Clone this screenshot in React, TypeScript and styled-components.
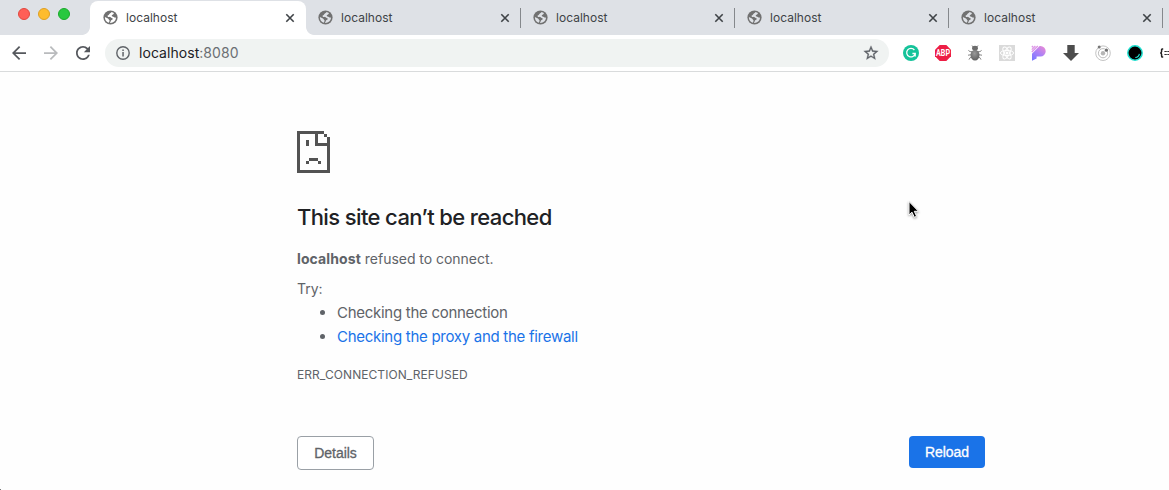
import React from "react";
import styled, { createGlobalStyle } from "styled-components";

const GlobalStyle = createGlobalStyle`
  * { box-sizing: border-box; }
  html, body { margin: 0; background: #fff; overflow: hidden; }
  svg { display: block; flex: none; overflow: visible; }
`;

const Window = styled.div`
  position: relative;
  width: 1169px;
  height: 490px;
  overflow: hidden;
  display: flex;
  flex-direction: column;
  background: #fefefe;
  font-family: Inter, "Liberation Sans", sans-serif;
  color: #5f6368;
`;

const TabStrip = styled.header`
  display: flex;
  height: 35px;
  flex: none;
  background: #dee1e6;
`;

const TrafficLights = styled.div`
  display: flex;
  gap: 8px;
  width: 90px;
  padding: 8px 0 0 18px;
  flex: none;
`;

const Light = styled.span<{ $fill: string; $edge: string }>`
  width: 12px;
  height: 12px;
  border-radius: 50%;
  background: ${(p) => p.$fill};
  border: 1px solid ${(p) => p.$edge};
`;

const Tab = styled.div<{ $active?: boolean; $inset: number }>`
  position: relative;
  display: flex;
  align-items: center;
  flex: none;
  width: ${(p) => (p.$active ? 216 : 214)}px;
  height: ${(p) => (p.$active ? 34 : 35)}px;
  margin-top: ${(p) => (p.$active ? 1 : 0)}px;
  padding: ${(p) => (p.$active ? "0 11px 1px 0" : "0 10px 0 0")};
  padding-left: ${(p) => p.$inset}px;
  border-radius: ${(p) => (p.$active ? "8px 8px 0 0" : "0")};
  background: ${(p) => (p.$active ? "#fff" : "transparent")};

  &::before,
  &::after {
    content: "";
    display: ${(p) => (p.$active ? "block" : "none")};
    position: absolute;
    bottom: 0;
    width: 8px;
    height: 8px;
  }
  &::before {
    left: -8px;
    background: radial-gradient(circle at 0 0, transparent 7.5px, #fff 8.2px);
  }
  &::after {
    right: -8px;
    background: radial-gradient(circle at 100% 0, transparent 7.5px, #fff 8.2px);
  }
`;

const Divider = styled.span`
  width: 1px;
  height: 20px;
  margin: 8px -1px 0 0;
  flex: none;
  background: #85888c;
`;

const TabTitle = styled.span`
  flex: 1;
  margin-left: 8px;
  font-size: 12px;
  line-height: 16px;
  letter-spacing: 0.02px;
  color: #3f4347;
`;

const Toolbar = styled.nav`
  display: flex;
  align-items: center;
  height: 37px;
  flex: none;
  padding: 0 0 1px 12px;
  background: #fff;
  border-bottom: 1px solid #d9dbdc;
`;

const NavIcons = styled.div`
  display: flex;
  align-items: center;
  gap: 18px;
  width: 93px;
  flex: none;
`;

const AddressBar = styled.div`
  display: flex;
  align-items: center;
  width: 784px;
  height: 28px;
  flex: none;
  padding: 0 10px 0 11px;
  border-radius: 14px;
  background: #f0f3f2;
`;

const Url = styled.span`
  flex: 1;
  margin-left: 9px;
  font-size: 14px;
  line-height: 20px;
  letter-spacing: 0.05px;
  color: #202124;
`;

const Port = styled.span`
  color: #6b6f73;
`;

const Extensions = styled.div`
  display: flex;
  gap: 16px;
  margin-left: 14px;
  flex: none;
`;

const Page = styled.main`
  width: 688px;
  margin-left: 297px;
  padding-top: 59px;
`;

const Heading = styled.h1`
  margin: 30px 0 0;
  font-size: 22px;
  line-height: 28px;
  font-weight: 500;
  letter-spacing: -0.62px;
  white-space: nowrap;
  color: #202124;
`;

const Message = styled.p<{ $top: number }>`
  margin: ${(p) => p.$top}px 0 0;
  font-size: 14px;
  line-height: 24px;
  letter-spacing: -0.03px;
  white-space: nowrap;
`;

const Host = styled.strong`
  letter-spacing: 0.11px;
`;

const Suggestions = styled.ul`
  margin: 0;
  padding-left: 40px;
  font-size: 15px;
  line-height: 24px;
  letter-spacing: -0.28px;
`;

const Link = styled.a`
  color: #1a73e8;
`;

const ErrorCode = styled.div`
  margin-top: 18px;
  font-size: 12px;
  line-height: 16px;
  letter-spacing: 0.07px;
`;

const Actions = styled.div`
  display: flex;
  justify-content: space-between;
  align-items: flex-start;
  margin-top: 53px;
`;

const Button = styled.button<{ $primary?: boolean }>`
  width: ${(p) => (p.$primary ? 76 : 77)}px;
  height: ${(p) => (p.$primary ? 32 : 34)}px;
  padding: 0;
  border: ${(p) => (p.$primary ? "0" : "1px solid #9aa0a6")};
  border-radius: 4px;
  background: ${(p) => (p.$primary ? "#1a73e8" : "#fff")};
  color: ${(p) => (p.$primary ? "#fff" : "#5f6368")};
  font-family: "Liberation Sans", Arial, sans-serif;
  font-size: 14px;
  line-height: 20px;
  letter-spacing: -0.03px;
  -webkit-text-stroke: 0.3px currentColor;
`;

const Pointer = styled.svg`
  position: absolute;
  left: 905px;
  top: 199px;
  filter: drop-shadow(0 1px 1px rgba(0, 0, 0, 0.4));
`;

const Corner = styled.span`
  position: absolute;
  left: 0;
  bottom: 0;
  width: 1px;
  height: 1px;
  background: #777;
`;

const Globe = ({ land }: { land: string }) => (
  <svg width="15" height="15" viewBox="0 0 15 15">
    <circle cx="7.5" cy="7.5" r="7.1" fill="#717171" />
    <path
      d="M8.6 1.9 C8 3.3 6.2 3.2 6 4.6 C5.9 5.5 4.4 5.2 4.5 6.2 C4.7 7 7 6.5 7.8 7.3 C8.2 8.2 9.3 7.8 9.7 8.6 C10 9.7 8.7 9.9 8 10.6 L7 12.9 C9.9 13.2 12.9 10.8 13 7.7 C12.3 7.5 11.5 7.8 10.9 7 C10.3 6.2 8.5 6.5 8.7 5.4 C9 4.4 11 4.6 10.9 2.9 Z"
      fill={land}
    />
    <path d="M1.9 6.9 C3 7.9 5.2 7.8 5.5 9.1 C5.7 10.1 6.8 10 6.5 11 L5.9 12.8 C3.4 12 1.7 9.8 1.9 6.9Z" fill={land} />
  </svg>
);

const Close = () => (
  <svg width="10" height="10" viewBox="0 0 10 10">
    <path d="M1.3 1.3 8.7 8.7 M8.7 1.3 1.3 8.7" stroke="#3f4347" strokeWidth="1.6" />
  </svg>
);

const BackArrow = ({ color }: { color: string }) => (
  <svg width="14" height="14" viewBox="4 4 16 16">
    <path fill={color} d="M20 11H7.83l5.59-5.59L12 4l-8 8 8 8 1.41-1.41L7.83 13H20v-2z" />
  </svg>
);

const ForwardArrow = ({ color }: { color: string }) => (
  <svg width="14" height="14" viewBox="4 4 16 16">
    <path fill={color} d="M12 4l-1.41 1.41L16.17 11H4v2h12.17l-5.58 5.59L12 20l8-8z" />
  </svg>
);

const Refresh = () => (
  <svg width="14" height="14" viewBox="4 4 16 16">
    <path
      fill="#55585d"
      d="M17.65 6.35C16.2 4.9 14.21 4 12 4c-4.42 0-7.99 3.58-7.99 8s3.57 8 7.99 8c3.73 0 6.84-2.55 7.73-6h-2.08c-.82 2.33-3.04 4-5.65 4-3.31 0-6-2.69-6-6s2.69-6 6-6c1.66 0 3.14.69 4.22 1.78L13 11h7V4l-2.35 2.35z"
    />
  </svg>
);

const Info = () => (
  <svg width="14" height="14" viewBox="0 0 14 14">
    <circle cx="7" cy="7" r="6.2" fill="none" stroke="#5f6368" strokeWidth="1.4" />
    <path d="M6.3 3.4h1.5v1.5H6.3z M6.3 6h1.5v4.6H6.3z" fill="#5f6368" />
  </svg>
);

const Star = () => (
  <svg width="16" height="16" viewBox="1 1 22 22">
    <path
      fill="#5f6368"
      stroke="#5f6368"
      strokeWidth="0.4"
      d="M22 9.24l-7.19-.62L12 2 9.19 8.63 2 9.24l5.46 4.73L5.82 21 12 17.27 18.18 21l-1.63-7.03L22 9.24zM12 15.4l-3.76 2.27 1-4.28-3.32-2.88 4.38-.38L12 6.1l1.71 4.04 4.38.38-3.32 2.88 1 4.28L12 15.4z"
    />
  </svg>
);

const Grammar = () => (
  <svg width="16" height="16" viewBox="0 0 16 16">
    <circle cx="8" cy="8" r="8" fill="#15c39a" />
    <path d="M11.4 5A4.3 4.3 0 1 0 12.2 8.6 M12.9 8.5H9.4 M12.2 8.5V11.4" fill="none" stroke="#fff" strokeWidth="1.3" />
  </svg>
);

const AdBlock = () => (
  <svg width="16" height="16" viewBox="0 0 16 16">
    <path d="M4.7 0h6.6L16 4.7v6.6L11.3 16H4.7L0 11.3V4.7z" fill="#ed1e45" />
    <text x="8" y="11" textAnchor="middle" textLength="14" lengthAdjust="spacingAndGlyphs" fill="#fff" fontFamily="Roboto, sans-serif" fontWeight="700" fontSize="8.4">
      ABP
    </text>
  </svg>
);

const Bug = () => (
  <svg width="16" height="16" viewBox="0 0 16 16">
    <defs>
      <radialGradient id="shell" cx=".45" cy=".35" r=".65">
        <stop offset="0" stopColor="#999" />
        <stop offset="1" stopColor="#606060" />
      </radialGradient>
    </defs>
    <path
      d="M5 6.8 3 6.6 1.4 5.4 M11 6.8l2-.2 1.6-1.2 M5 9.6 1 10.2 M11 9.6l4 .6 M5 12 3.2 12.6 2 14.6 M11 12l1.8.6 1.2 2 M6.6 2.4 5 .5 M9.4 2.4 11 .5"
      stroke="#777"
      strokeWidth="0.9"
      fill="none"
    />
    <ellipse cx="8" cy="3.2" rx="2.9" ry="2.4" fill="#6c6c6c" />
    <ellipse cx="8" cy="10.1" rx="4.5" ry="5.4" fill="url(#shell)" />
  </svg>
);

const Atom = () => (
  <svg width="16" height="16" viewBox="0 0 16 16">
    <rect width="16" height="16" fill="#dadada" />
    <g fill="none" stroke="#fff" strokeWidth="1">
      <ellipse cx="8" cy="8" rx="6.6" ry="2.6" />
      <ellipse cx="8" cy="8" rx="6.6" ry="2.6" transform="rotate(60 8 8)" />
      <ellipse cx="8" cy="8" rx="6.6" ry="2.6" transform="rotate(120 8 8)" />
    </g>
    <circle cx="8" cy="8" r="1.5" fill="#fff" />
  </svg>
);

const GradientP = () => (
  <svg width="16" height="16" viewBox="0 0 16 16">
    <defs>
      <linearGradient id="petal" x1="0.1" y1="1" x2="0.8" y2="0">
        <stop offset="0" stopColor="#7878ff" />
        <stop offset="0.5" stopColor="#a980f8" />
        <stop offset="1" stopColor="#e58ad8" />
      </linearGradient>
    </defs>
    <path d="M1 8.8 8.6 1H9.4a5 5 0 0 1 0 10.6H5.6V13.6L1 15.8z" fill="url(#petal)" />
    <path d="M.8 7 6.8 1 M.8 4.6 4.4 1 M.8 2.3 2.1 1" stroke="#dc96e6" strokeWidth="1.3" />
  </svg>
);

const Download = () => (
  <svg width="16" height="16" viewBox="0 0 16 16">
    <path d="M4.3 0h7.4v8H16l-8 8-8-8h4.3z" fill="#4d4d4d" />
  </svg>
);

const Orbit = () => (
  <svg width="16" height="16" viewBox="0 0 16 16">
    <circle cx="8" cy="8.2" r="7.3" fill="none" stroke="#c4c4c4" strokeWidth="1" />
    <circle cx="8" cy="8.2" r="4.6" fill="none" stroke="#bdbdbd" strokeWidth="1" />
    <circle cx="8" cy="8.2" r="2.2" fill="#b5b5b5" />
    <circle cx="4.2" cy="1.9" r="1.5" fill="#777" />
    <circle cx="11.4" cy="5.2" r="1.6" fill="#707070" />
  </svg>
);

const Moon = () => (
  <svg width="16" height="16" viewBox="0 0 16 16">
    <circle cx="8" cy="8" r="7.2" fill="#000" stroke="#1fe0d0" strokeWidth="1.5" />
    <path d="M12.4 8.8A4.7 4.7 0 0 1 8.3 12.5" fill="none" stroke="#1fe0d0" strokeWidth="1.1" />
  </svg>
);

const Braces = () => (
  <svg width="16" height="16" viewBox="0 0 16 16">
    <path d="M4.2 3.9H3.3Q2.6 3.9 2.6 5V6.6Q2.6 8 1.2 8 2.6 8 2.6 9.4V11Q2.6 12.1 3.3 12.1H4.2" fill="none" stroke="#222" strokeWidth="1.5" />
    <path d="M5.4 6.5h5.4M5.4 9.5h5.4" stroke="#333" strokeWidth="1.2" strokeDasharray="2.4 .5" />
  </svg>
);

const SadPage = () => (
  <svg width="33" height="42" viewBox="0 0 11 14" shapeRendering="crispEdges">
    <path
      fill="#535353"
      d="M0 0h9v1H7v3h3V2h1v12H0zM1 1v12h9V5H6V1zM9 1h1v1H9zM3 3h1v2H3zM4 9h3v1H4zM3 10h1v1H3zM7 10h1v1H7z"
      fillRule="evenodd"
    />
  </svg>
);

const EXTENSIONS = [Grammar, AdBlock, Bug, Atom, GradientP, Download, Orbit, Moon, Braces];

const TAB_INSETS = [13, 12, 13, 13, 13];

export default function App() {
  return (
    <Window>
      <GlobalStyle />
      <TabStrip>
        <TrafficLights>
          <Light $fill="#ff5f57" $edge="#e2483f" />
          <Light $fill="#febc2e" $edge="#dfa023" />
          <Light $fill="#28c840" $edge="#1aab29" />
        </TrafficLights>
        {TAB_INSETS.map((inset, i) => (
          <React.Fragment key={i}>
            <Tab $active={i === 0} $inset={inset}>
              <Globe land={i === 0 ? "#fff" : "#dee1e6"} />
              <TabTitle>localhost</TabTitle>
              <Close />
            </Tab>
            {i > 0 && <Divider />}
          </React.Fragment>
        ))}
      </TabStrip>
      <Toolbar>
        <NavIcons>
          <BackArrow color="#55585d" />
          <ForwardArrow color="#b9bbbd" />
          <Refresh />
        </NavIcons>
        <AddressBar>
          <Info />
          <Url>
            localhost<Port>:8080</Port>
          </Url>
          <Star />
        </AddressBar>
        <Extensions>
          {EXTENSIONS.map((Icon, i) => (
            <Icon key={i} />
          ))}
        </Extensions>
      </Toolbar>
      <Page>
        <SadPage />
        <Heading>This site can’t be reached</Heading>
        <Message $top={16}>
          <Host>localhost</Host> refused to connect.
        </Message>
        <Message $top={6}>Try:</Message>
        <Suggestions>
          <li>Checking the connection</li>
          <li>
            <Link>Checking the proxy and the firewall</Link>
          </li>
        </Suggestions>
        <ErrorCode>ERR_CONNECTION_REFUSED</ErrorCode>
        <Actions>
          <Button>Details</Button>
          <Button $primary>Reload</Button>
        </Actions>
      </Page>
      <Pointer width="16" height="22" viewBox="0 0 16 22">
        <path d="M4 2.5V16l3-2.8 2.3 5.1 2.3-1L9.3 12.3h4.2z" fill="#000" stroke="#fff" strokeWidth="1" />
      </Pointer>
      <Corner />
    </Window>
  );
}
